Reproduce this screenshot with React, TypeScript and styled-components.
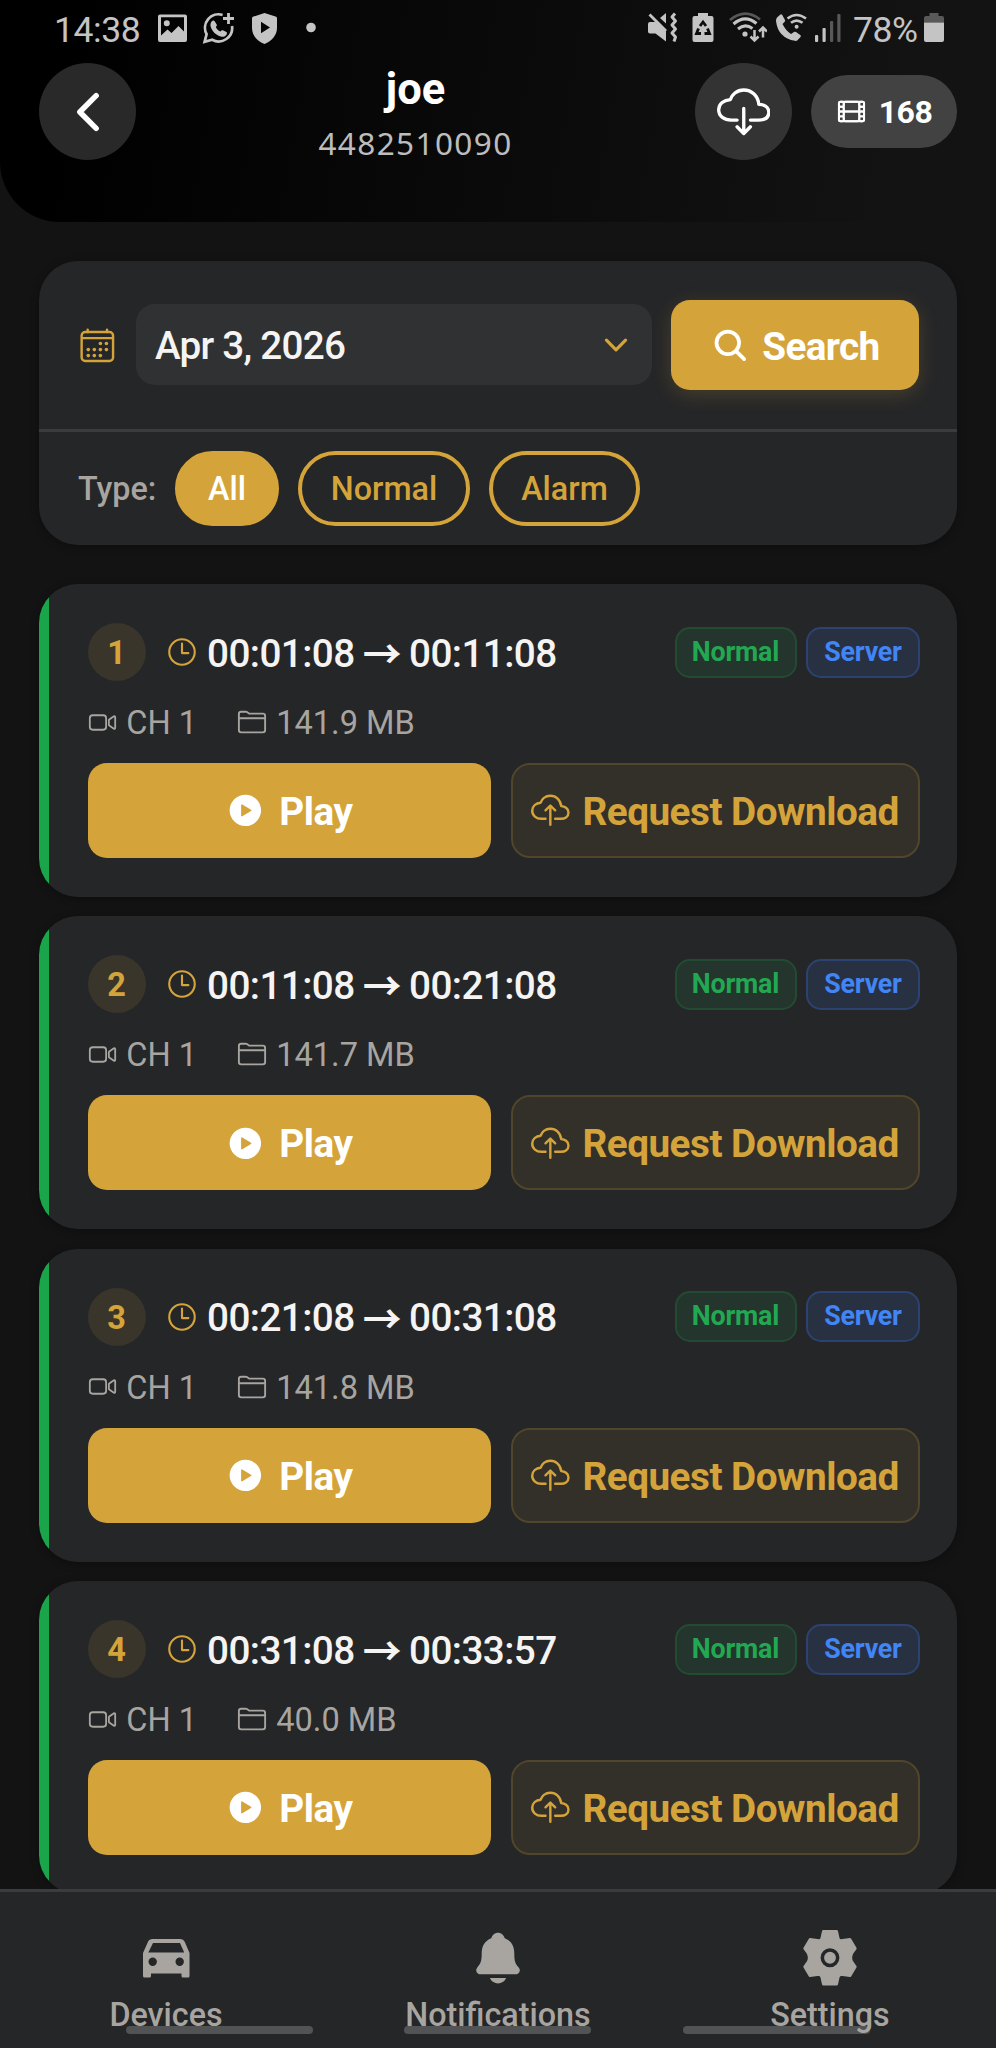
import React from "react";
import styled, { createGlobalStyle, css } from "styled-components";
import {
  IoChevronBack,
  IoChevronDown,
  IoCloudDownloadOutline,
  IoCloudUploadOutline,
  IoFilmOutline,
  IoCalendarOutline,
  IoSearch,
  IoTimeOutline,
  IoVideocamOutline,
  IoFolderOutline,
  IoPlayCircle,
  IoNotifications,
} from "react-icons/io5";

const gold = "#d4a43a";
const surface = "#252628";
const muted = "#a8a5a0";

const GlobalStyle = createGlobalStyle`
  * { box-sizing: border-box; }
  html, body { margin: 0; background: #131313; }
  body { font-family: Roboto, "Liberation Sans", sans-serif; overflow: hidden; }
  svg { display: block; flex: none; }
`;

const Screen = styled.div`
  width: 996px;
  height: 2048px;
  display: flex;
  flex-direction: column;
  overflow: hidden;
  background: #131313;
`;

const Header = styled.header`
  flex: none;
  height: 222px;
  border-radius: 0 0 60px 60px;
  background: linear-gradient(100deg, #000 8%, #131313 90%);
`;

const StatusBar = styled.div`
  height: 63px;
  padding: 0 52px 0 54px;
  display: flex;
  align-items: flex-start;
  justify-content: space-between;
  color: #c4c4c4;
`;

const StatusGroup = styled.div`
  display: flex;
  align-items: flex-start;
`;

const StatusText = styled.span<{ $width: number }>`
  width: ${(p) => p.$width}px;
  padding-top: 9px;
  font-size: 35.5px;
  line-height: 42px;
  letter-spacing: -0.4px;
  white-space: nowrap;
`;

const StatusIcon = styled.span<{ $gap: number }>`
  margin-left: ${(p) => p.$gap}px;
  padding-top: 12px;
`;

const TopRow = styled.div`
  display: flex;
  align-items: center;
  padding: 0 39px;
  height: 97px;
`;

const RoundButton = styled.button<{ $bg: string }>`
  width: 97px;
  height: 97px;
  padding: 0;
  border: 0;
  border-radius: 50%;
  background: ${(p) => p.$bg};
  color: #fff;
  display: flex;
  align-items: center;
  justify-content: center;
`;

const Titles = styled.div`
  flex: 1;
  height: 97px;
  display: flex;
  flex-direction: column;
  align-items: center;
`;

const Title = styled.h1`
  margin: 1px 0 0;
  font-size: 43.5px;
  line-height: 52px;
  font-weight: 700;
  color: #fff;
`;

const Serial = styled.div`
  font-family: "Noto Sans", sans-serif;
  font-size: 31.5px;
  line-height: 54px;
  letter-spacing: 1.4px;
  color: #bdbdbd;
`;

const CountPill = styled.div`
  margin-left: 19px;
  width: 146px;
  height: 73px;
  border-radius: 37px;
  background: #424242;
  color: #fff;
  display: flex;
  align-items: center;
  justify-content: center;
  gap: 12px;
  font-size: 32px;
  font-weight: 700;
  letter-spacing: -0.5px;
`;

const Main = styled.main`
  flex: 1;
  min-height: 0;
  padding: 39px 39px 0;
  overflow: hidden;
`;

const Filters = styled.section`
  height: 284px;
  border-radius: 39px;
  background: ${surface};
  box-shadow: 0 2px 8px rgba(0, 0, 0, 0.3);
`;

const DateRow = styled.div`
  height: 168px;
  padding: 39px 38px 0 39px;
  display: flex;
  align-items: flex-start;
`;

const CalendarSlot = styled.div`
  height: 90px;
  width: 58px;
  display: flex;
  align-items: center;
  color: ${gold};
`;

const DateField = styled.div`
  margin-top: 4px;
  width: 516px;
  height: 81px;
  padding: 0 19px 0 19px;
  border-radius: 19px;
  background: #303133;
  color: #f5f4f2;
  font-size: 38.7px;
  font-weight: 500;
  letter-spacing: -0.75px;
  display: flex;
  align-items: center;
  justify-content: space-between;
  svg { color: ${gold}; }
`;

const Label = styled.span`
  padding-top: 2px;
`;

const SearchButton = styled.button`
  margin-left: 19px;
  width: 248px;
  height: 90px;
  padding: 0;
  border: 0;
  border-radius: 19px;
  background: ${gold};
  box-shadow: 0 5px 20px rgba(212, 164, 58, 0.2);
  color: #fff;
  font: 700 38.7px Roboto, sans-serif;
  letter-spacing: -0.65px;
  display: flex;
  align-items: center;
  justify-content: center;
  gap: 13px;
`;

const TypeRow = styled.div`
  height: 116px;
  border-top: 3px solid #3b3c3f;
  padding: 19px 39px 0;
  display: flex;
  gap: 19px;
`;

const TypeLabel = styled.span`
  width: 78px;
  line-height: 77px;
  font-size: 32.3px;
  font-weight: 500;
  color: ${muted};
  white-space: nowrap;
`;

const TypePill = styled.button<{ $width: number; $active?: boolean }>`
  width: ${(p) => p.$width}px;
  height: 75px;
  padding: 1px 0 0;
  border: 4px solid ${gold};
  border-radius: 38px;
  background: ${(p) => (p.$active ? gold : "transparent")};
  color: ${(p) => (p.$active ? "#fff" : gold)};
  font: 500 32.3px Roboto, sans-serif;
`;

const List = styled.div`
  margin-top: 39px;
  display: flex;
  flex-direction: column;
  gap: 19.4px;
`;

const Card = styled.article`
  flex: none;
  height: 313px;
  border-radius: 39px;
  overflow: hidden;
  background: linear-gradient(90deg, #1aa54b 10px, ${surface} 10px);
  box-shadow: 0 2px 8px rgba(0, 0, 0, 0.3);
  padding: 39px 37px 0 48.5px;
`;

const CardHead = styled.div`
  height: 58px;
  display: flex;
  align-items: center;
`;

const Index = styled.span`
  width: 58px;
  height: 58px;
  padding-top: 2px;
  border-radius: 50%;
  background: #3a352a;
  color: ${gold};
  font-size: 32.5px;
  font-weight: 700;
  display: flex;
  align-items: center;
  justify-content: center;
`;

const ClockSlot = styled.span`
  margin: 0 8.5px 0 19px;
  color: ${gold};
`;

const TimeRange = styled.span`
  flex: 1;
  padding-top: 2px;
  display: flex;
  align-items: center;
  color: #f5f4f2;
  font-size: 38.7px;
  font-weight: 500;
  letter-spacing: -0.6px;
  white-space: nowrap;
`;

const Arrow = styled.span`
  width: 54.5px;
  display: flex;
  justify-content: center;
  font-family: "Noto Sans CJK JP", sans-serif;
  font-size: 38.7px;
  font-weight: 700;
  line-height: 40px;
  position: relative;
  top: -2px;
`;

const badgeTones = {
  normal: css`
    width: 122px;
    color: #22a852;
    background: #23352c;
    border-color: #234b33;
  `,
  server: css`
    width: 114px;
    color: #4285f4;
    background: #283142;
    border-color: #2c4270;
  `,
};

const Badge = styled.span<{ $tone: "normal" | "server" }>`
  height: 51px;
  margin-left: 9.5px;
  border: 2.4px solid;
  border-radius: 15px;
  font-size: 26.8px;
  font-weight: 700;
  letter-spacing: -0.2px;
  line-height: 47px;
  text-align: center;
  ${(p) => badgeTones[p.$tone]}
`;

const Meta = styled.div`
  height: 82px;
  display: flex;
  align-items: center;
  color: ${muted};
  font-size: 32.6px;
`;

const MetaItem = styled.span<{ $width?: number }>`
  width: ${(p) => (p.$width ? p.$width + "px" : "auto")};
  display: flex;
  align-items: center;
  gap: 9.7px;
  white-space: nowrap;
`;

const Actions = styled.div`
  display: flex;
  gap: 20px;
`;

const ActionButton = styled.button<{ $primary?: boolean }>`
  width: ${(p) => (p.$primary ? 403 : 409)}px;
  height: 95px;
  padding: 0;
  border: ${(p) => (p.$primary ? "0" : "2.4px solid #51452a")};
  border-radius: 19px;
  background: ${(p) => (p.$primary ? gold : "#33302a")};
  color: ${(p) => (p.$primary ? "#fff" : gold)};
  font: 700 38.7px Roboto, sans-serif;
  letter-spacing: -0.5px;
  white-space: nowrap;
  display: flex;
  align-items: center;
  justify-content: center;
  gap: ${(p) => (p.$primary ? 15 : 12.5)}px;
`;

const Nav = styled.nav`
  flex: none;
  position: relative;
  height: 159px;
  border-top: 3px solid #3b3c3f;
  background: ${surface};
  display: grid;
  grid-template-columns: repeat(3, 1fr);
`;

const NavItem = styled.a`
  position: relative;
  padding-top: 37px;
  display: flex;
  flex-direction: column;
  align-items: center;
  color: ${muted};
`;

const NavIcon = styled.span`
  height: 58px;
  display: flex;
  align-items: center;
`;

const NavLabel = styled.span`
  margin-top: 9px;
  font-size: 32.3px;
  line-height: 38px;
  font-weight: 500;
`;

const GestureHint = styled.span<{ $left: number }>`
  position: absolute;
  left: ${(p) => p.$left}px;
  top: 134px;
  width: 187px;
  height: 8px;
  border-radius: 4px;
  background: #525355;
`;

const Picture = () => (
  <svg width="29" height="31" viewBox="0 0 29 31">
    <path
      fillRule="evenodd"
      fill="currentColor"
      d="M2 2.500H27Q29 2.500 29 4.500V28Q29 30 27 30H2Q0 30 0 28V4.500Q0 2.500 2 2.500ZM3 5.300V23.500L9.500 17.500 13.500 21 20.500 14 26 19.500V5.300ZM8.800 8.300A3 3 0 1 1 8.800 14.300 3 3 0 1 1 8.800 8.300Z"
    />
  </svg>
);

const WhatsAppPlus = () => (
  <svg width="33" height="33" viewBox="0 0 33 33" fill="none" stroke="currentColor">
    <path d="M20.600 3A13.500 13.500 0 0 0 4.600 22.200L2.600 29.800l7.600-2A13.500 13.500 0 0 0 30 14" strokeWidth="2.700" />
    <path d="M26.500 1v11M21 6.500h11" strokeWidth="2.800" />
    <path
      d="M9.900 9.300c.6-.9 2-1 2.600-.2l2.200 3.500c.4.8.1 1.500-.9 2.500 1 2 2.500 3.500 4.600 4.500 1-1.200 1.700-1.700 2.500-1.300l3.500 1.800c.8.5.7 1.500.2 2.300-1.200 1.900-3.200 2.800-5.700 2.100-5-1.500-8.700-5-10.200-9.800-.6-2-.1-4.200 1.200-5.400z"
      fill="currentColor"
      stroke="none"
    />
  </svg>
);

const ShieldPlay = () => (
  <svg width="27" height="33" viewBox="0 0 27 33">
    <path
      fillRule="evenodd"
      fill="currentColor"
      d="M13.500 1 24.500 4.600C25.500 5 26 5.600 26 6.600V16C26 23 21 29 13.500 32 6 29 1 23 1 16V6.600C1 5.600 1.500 5 2.500 4.600ZM10 9.800V21.200L19 15.500Z"
    />
  </svg>
);

const Dot = () => (
  <svg width="10" height="33" viewBox="0 0 10 33">
    <circle cx="5" cy="15.500" r="4.800" fill="currentColor" />
  </svg>
);

const MuteVibrate = () => (
  <svg width="31" height="31" viewBox="0 0 31 31">
    <path d="M1 12q0-2 2-2h5.500L19 19.500V29.500L8.500 21.500H3q-2 0-2-2zM13 6l6-5v10.500z" fill="currentColor" />
    <path d="M2.500 2.500 19 19" stroke="currentColor" strokeWidth="2.800" />
    <path
      d="M28 1.500 25 5l3.500 4-3.500 4 3.500 4-3.500 4 3.500 4-1.500 4.500"
      fill="none"
      stroke="currentColor"
      strokeWidth="3"
      strokeLinejoin="round"
    />
  </svg>
);

const BatteryRecycle = () => (
  <svg width="22" height="31" viewBox="0 0 22 31">
    <path d="M6 1h10v3h3.500Q21.500 4 21.500 6v22q0 2-2 2h-17q-2 0-2-2V6q0-2 2-2H6z" fill="currentColor" />
    <path
      d="M8 14 11 10l3 4M15.500 16.500l2 5h-5M9 21.500H4.500l2-5"
      fill="none"
      stroke="#0d0d0d"
      strokeWidth="2.800"
    />
  </svg>
);

const WifiArrows = () => (
  <svg width="38" height="31" viewBox="0 0 38 31" fill="none" stroke="currentColor">
    <path d="M1 8Q16 -4.500 31 7.500" strokeWidth="2.800" opacity=".4" />
    <path d="M4.500 12Q16 2 27.500 11.500M9 17q7-6 14.500-.5" strokeWidth="3" />
    <circle cx="16" cy="22" r="2.600" fill="currentColor" stroke="none" />
    <path d="M25.500 18v10M21.500 24.500l4 4 4-4M34 25.500V16M30 19.500l4-4 4 4" strokeWidth="2.500" />
  </svg>
);

const WifiCall = () => (
  <svg width="32" height="31" viewBox="0 0 32 31" fill="none" stroke="currentColor">
    <path
      d="M2 5.500 5.500 2.500q1-.6 1.600.3L10 8q.3 1-.3 1.800L7.500 12q3.500 7 8.500 10l3-2q1-.6 2 0l4.500 3.200q.8.800 0 1.800l-3 3.200q-1 .9-2.500.6Q3 26 1 9q-.1-2 1-3.500z"
      fill="currentColor"
      stroke="none"
    />
    <path d="M12.500 6.500q9-7 18.500 0M16 10.800q5.500-4.500 11.500 0" strokeWidth="2.600" />
    <circle cx="21.600" cy="14.800" r="2" fill="currentColor" stroke="none" />
  </svg>
);

const Signal = () => (
  <svg width="26" height="31" viewBox="0 0 26 31" fill="currentColor">
    <rect x="0" y="23" width="3.200" height="7" rx="1" />
    <rect x="7.500" y="16" width="3.200" height="14" rx="1" />
    <rect x="15" y="9" width="3.200" height="21" rx="1" opacity=".4" />
    <rect x="22.300" y="2" width="3.200" height="28" rx="1" opacity=".4" />
  </svg>
);

const Battery = () => (
  <svg width="20" height="31" viewBox="0 0 20 31" fill="currentColor">
    <path d="M5.500 1h9v3h3.500q2 0 2 2v4.500H0V6q0-2 2-2h3.500z" opacity=".4" />
    <path d="M0 10.500h20V28q0 2-2 2H2q-2 0-2-2z" />
  </svg>
);

const Car = () => (
  <svg width="47" height="39" viewBox="0 0 47 39">
    <path
      fillRule="evenodd"
      fill="currentColor"
      d="M9.500 0H37.500Q40.500 0 41.700 2.800L46.500 14V37Q46.500 38.500 45 38.500H40Q38.500 38.500 38.500 37V34.500H8V37Q8 38.500 6.500 38.500H1.500Q0 38.500 0 37V14L5 2.800Q6.300 0 9.500 0ZM10 4 5.300 13.500H41.200L37 4ZM9.700 18.500A4.200 4.200 0 1 0 9.700 26.900 4.200 4.200 0 1 0 9.700 18.500ZM36.700 18.500A4.200 4.200 0 1 0 36.700 26.900 4.200 4.200 0 1 0 36.700 18.500Z"
    />
  </svg>
);

const Gear = () => (
  <svg width="54" height="55.500" viewBox="0 0 162 166">
    <path
      fill="currentColor"
      stroke="currentColor"
      strokeWidth="8"
      strokeLinejoin="round"
      d="M61 4H101L106 26Q109 33 119 31L141 28 157 55 147 69Q140 83 147 96L157 110 141 137 119 134Q109 132 106 140L101 162H61L56 140Q53 132 43 134L21 137 5 110 15 96Q22 83 15 69L5 55 21 28 43 31Q53 33 56 26Z"
    />
    <circle cx="81" cy="83" r="23" fill="none" stroke={surface} strokeWidth="10.500" />
  </svg>
);

const recordings = [
  { start: "00:01:08", end: "00:11:08", size: "141.9 MB" },
  { start: "00:11:08", end: "00:21:08", size: "141.7 MB" },
  { start: "00:21:08", end: "00:31:08", size: "141.8 MB" },
  { start: "00:31:08", end: "00:33:57", size: "40.0 MB" },
];

export default function App() {
  return (
    <>
      <GlobalStyle />
      <Screen>
        <Header>
          <StatusBar>
            <StatusGroup>
              <StatusText $width={88}>14:38</StatusText>
              <StatusIcon $gap={16}><Picture /></StatusIcon>
              <StatusIcon $gap={15}><WhatsAppPlus /></StatusIcon>
              <StatusIcon $gap={16}><ShieldPlay /></StatusIcon>
              <StatusIcon $gap={28}><Dot /></StatusIcon>
            </StatusGroup>
            <StatusGroup>
              <StatusIcon $gap={0}><MuteVibrate /></StatusIcon>
              <StatusIcon $gap={14}><BatteryRecycle /></StatusIcon>
              <StatusIcon $gap={15}><WifiArrows /></StatusIcon>
              <StatusIcon $gap={8}><WifiCall /></StatusIcon>
              <StatusIcon $gap={8}><Signal /></StatusIcon>
              <StatusIcon $gap={12} />
              <StatusText $width={71}>78%</StatusText>
              <StatusIcon $gap={0}><Battery /></StatusIcon>
            </StatusGroup>
          </StatusBar>
          <TopRow>
            <RoundButton $bg="#292929"><IoChevronBack size={58} /></RoundButton>
            <Titles>
              <Title>joe</Title>
              <Serial>4482510090</Serial>
            </Titles>
            <RoundButton $bg="#333"><IoCloudDownloadOutline size={53.5} /></RoundButton>
            <CountPill><IoFilmOutline size={31} />168</CountPill>
          </TopRow>
        </Header>

        <Main>
          <Filters>
            <DateRow>
              <CalendarSlot><IoCalendarOutline size={38.7} /></CalendarSlot>
              <DateField><Label>Apr 3, 2026</Label><IoChevronDown size={34} /></DateField>
              <SearchButton><IoSearch size={38.7} /><Label>Search</Label></SearchButton>
            </DateRow>
            <TypeRow>
              <TypeLabel>Type:</TypeLabel>
              <TypePill $width={104} $active>All</TypePill>
              <TypePill $width={172}>Normal</TypePill>
              <TypePill $width={151}>Alarm</TypePill>
            </TypeRow>
          </Filters>

          <List>
            {recordings.map((r, i) => (
              <Card key={r.start}>
                <CardHead>
                  <Index>{i + 1}</Index>
                  <ClockSlot><IoTimeOutline size={34} /></ClockSlot>
                  <TimeRange>{r.start}<Arrow>→</Arrow>{r.end}</TimeRange>
                  <Badge $tone="normal">Normal</Badge>
                  <Badge $tone="server">Server</Badge>
                </CardHead>
                <Meta>
                  <MetaItem $width={149}><IoVideocamOutline size={29} /><Label>CH 1</Label></MetaItem>
                  <MetaItem><IoFolderOutline size={30} /><Label>{r.size}</Label></MetaItem>
                </Meta>
                <Actions>
                  <ActionButton $primary><IoPlayCircle size={38.7} /><Label>Play</Label></ActionButton>
                  <ActionButton><IoCloudUploadOutline size={38.7} /><Label>Request Download</Label></ActionButton>
                </Actions>
              </Card>
            ))}
          </List>
        </Main>

        <Nav>
          <GestureHint $left={126} />
          <GestureHint $left={404} />
          <GestureHint $left={683} />
          <NavItem><NavIcon><Car /></NavIcon><NavLabel>Devices</NavLabel></NavItem>
          <NavItem><NavIcon><IoNotifications size={58} /></NavIcon><NavLabel>Notifications</NavLabel></NavItem>
          <NavItem><NavIcon><Gear /></NavIcon><NavLabel>Settings</NavLabel></NavItem>
        </Nav>
      </Screen>
    </>
  );
}
